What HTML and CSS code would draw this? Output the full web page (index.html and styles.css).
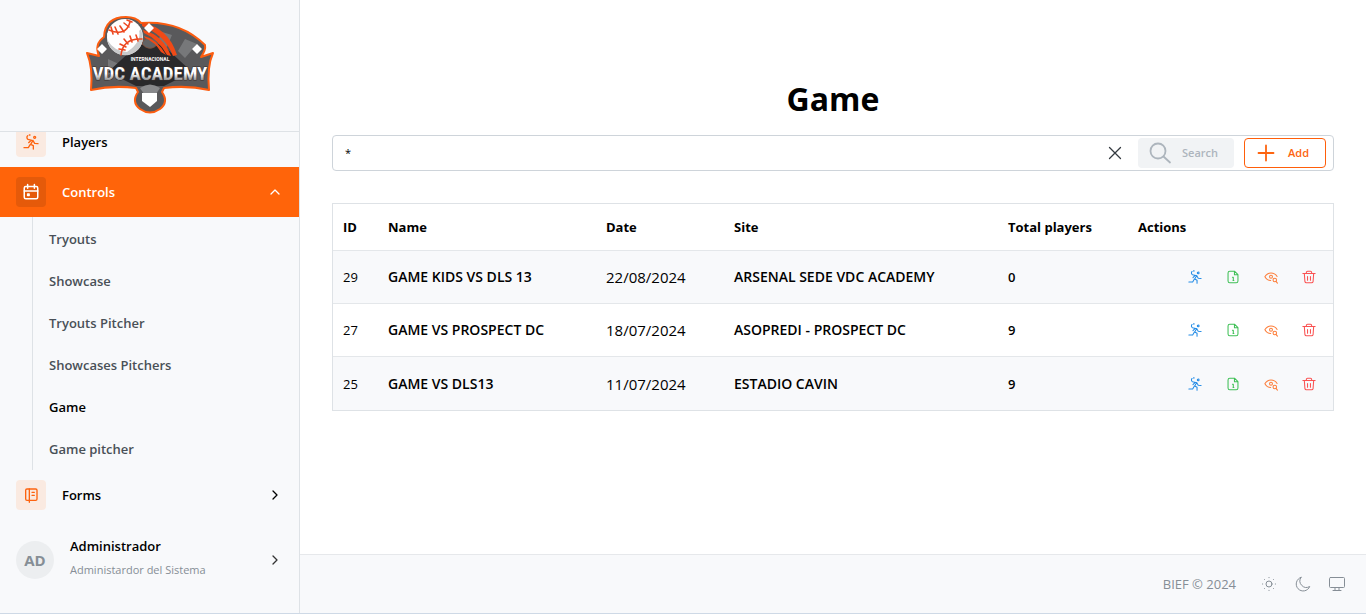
FILE: index.html
```html
<!DOCTYPE html>
<html lang="en">
<head>
<meta charset="utf-8">
<meta name="viewport" content="width=device-width, initial-scale=1">
<title>Game</title>
<link rel="stylesheet" href="styles.css">
</head>
<body>
<svg class="sprite" aria-hidden="true">
  <symbol id="run" viewBox="0 0 24 24"><circle cx="17.500" cy="5" r="1.500"/><path d="M7 2.500a3.500 3.500 0 0 0 .5 5.500l6 1.500M15 9.500l-3.500 6 4 2v5M11 15.500l-3 5H1.500M15 10l2.500 4 5 .5M8.500 13l3-3M9.500 1.500h1"/></symbol>
  <symbol id="file" viewBox="0 0 24 24"><path d="M14.500 2H6.500a3 3 0 0 0-3 3v14a3 3 0 0 0 3 3h11a3 3 0 0 0 3-3V8zM14.500 2v6h6M11 12.500h1.500v5.500M12 18h1.500"/></symbol>
  <symbol id="view" viewBox="0 0 24 24"><path d="M22.500 11C20 7.200 16.500 5 12 5S4 7.200 1.500 11.500C4 15.800 7 18 11.500 18"/><circle cx="12" cy="11.500" r="2.500"/><circle cx="18.500" cy="17" r="3"/><path d="M20.500 19.500l2.500 3"/></symbol>
  <symbol id="trash" viewBox="0 0 24 24"><path d="M1.500 6h21M7.500 6V4a2 2 0 0 1 2-2h5a2 2 0 0 1 2 2v2M4 6l1 14a2.500 2.500 0 0 0 2.500 2h9a2.500 2.500 0 0 0 2.500-2L20 6M9.500 11v6.500M14.500 11v6.500"/></symbol>
  <symbol id="chevron" viewBox="0 0 16 16"><path d="M6 4l4 4-4 4"/></symbol>
</svg>
<div class="shell">
  <aside class="sidebar">
    <header class="brand">
      <svg class="logo" viewBox="0 0 140 110" role="img" aria-label="VDC Academy">
        <defs><linearGradient id="steel" x1="0" y1="0" x2="0" y2="1"><stop offset=".5" stop-color="#fff"/><stop offset=".85" stop-color="#777"/></linearGradient></defs>
        <path d="M7 43L19 46Q14 34 24 27Q25 7 46 7Q56 7 61 13Q100 10 125 35Q126 40 121 47L133 43Q127 56 129 80Q107 75 84 78L82 82Q89 92 80 99Q70 106 60 99Q51 92 58 82L56 78Q33 75 11 80Q13 57 7 43Z" fill="#59595b" stroke="#fc5d10" stroke-width="2" stroke-linejoin="round"/>
        <path d="M82 22l10 3-5 12-10-4zM105 29l12 5-12 14-7-7zM28 49l13 6-13 10z" fill="#77787a"/>
        <path d="M54 38Q70 28 86 38L112 62 84 76H56L28 62Z" fill="#29292b"/>
        <path d="M60 78Q70 71 80 78L76 84H64Z" fill="#88898b"/>
        <path d="M62 34a8 6 0 0 1 16 0q-8 9-16 0z" fill="#626264" stroke="#8e4729" stroke-width=".6"/>
        <path d="M62 13Q88 17 97 45L93 46Q85 25 62 16ZM63 20Q83 25 91 46L87 45Q78 29 64 23ZM64 26Q77 29 86 45L81 42Q75 32 65 28Z" fill="#f04a16"/>
        <path d="M69 13l5 5-5 5-5-5zM22 34l5 5-5 5-5-5zM117 34l5 5-5 5-5-5z" fill="#fff"/>
        <circle cx="45" cy="27" r="18" fill="#fff"/>
        <path d="M27 30Q43 40 61 19Q67 39 49 45Q32 47 27 30Z" fill="#c9cacb"/>
        <path d="M27 23Q44 34 59 20Q62 32 47 42Q34 41 28 31Z" fill="#fff"/>
        <path d="M29 19Q46 26 50 11M41 44Q43 27 62 28" fill="none" stroke="#ed4921" stroke-width="1.600" transform="translate(0 1)"/>
        <path d="M31 17l2 7M35 17l3 7M40 16l4 6M44 13l5 4M47 10l5 2M39 39l6 1M40 34l6 3M44 29l4 5M50 26l2 6M56 25l2 6" stroke="#ed4921" stroke-width="1.600"/>
        <path d="M62 83h15v8l-7 6-8-6z" fill="#fff"/>
        <text x="70" y="51" class="logo-small">INTERNACIONAL</text>
        <text x="70" y="70" class="logo-text">VDC ACADEMY</text>
      </svg>
    </header>
    <nav class="menu" aria-label="Main">
      <a class="menu-item" href="#players"><span class="tile"><svg class="icon-sm bold"><use href="#run"/></svg></span><span>Players</span></a>
      <button class="menu-item active" type="button" aria-expanded="true"><span class="tile"><svg class="icon-md bold" viewBox="0 0 24 24"><rect x="3" y="4.500" width="18" height="16.500" rx="2"/><path d="M7.500 2v5M16.500 2v5M3 10.500h18"/><rect x="7.500" y="14.500" width="2" height="2"/></svg></span><span>Controls</span><svg class="chevron up"><use href="#chevron"/></svg></button>
      <div class="submenu">
        <a href="#tryouts">Tryouts</a>
        <a href="#showcase">Showcase</a>
        <a href="#tryouts-pitcher">Tryouts Pitcher</a>
        <a href="#showcases-pitchers">Showcases Pitchers</a>
        <a class="current" href="#game" aria-current="page">Game</a>
        <a href="#game-pitcher">Game pitcher</a>
      </div>
      <button class="menu-item" type="button" aria-expanded="false"><span class="tile"><svg class="icon-sm bold" viewBox="0 0 24 24"><rect x="4" y="3" width="17" height="17" rx="2"/><path d="M9.500 3v20M13.500 8H17M13.500 12.500H17"/></svg></span><span>Forms</span><svg class="chevron"><use href="#chevron"/></svg></button>
    </nav>
    <button class="user" type="button">
      <span class="avatar">AD</span>
      <span class="user-text"><span class="user-name">Administrador</span><span class="user-role">Administardor del Sistema</span></span>
      <svg class="chevron"><use href="#chevron"/></svg>
    </button>
  </aside>
  <div class="page">
    <main class="content">
      <h1>Game</h1>
      <form class="search">
        <input type="text" value="*" aria-label="Search games">
        <button class="clear" type="reset" aria-label="Clear"><svg viewBox="0 0 16 16"><path d="M2.500 2.500l11 11M13.500 2.500l-11 11"/></svg></button>
        <button class="btn btn-search" type="submit" disabled><svg viewBox="0 0 24 24"><circle cx="10" cy="10" r="7.500"/><path d="M15.500 15.500L22 21.500"/></svg>Search</button>
        <button class="btn btn-add" type="button"><svg viewBox="0 0 24 24"><path d="M12 4.500v15M4.500 12h15"/></svg>Add</button>
      </form>
      <table>
        <colgroup><col class="c-id"><col class="c-name"><col class="c-date"><col class="c-site"><col class="c-total"><col class="c-actions"></colgroup>
        <thead><tr><th>ID</th><th>Name</th><th>Date</th><th>Site</th><th>Total players</th><th>Actions</th></tr></thead>
        <tbody>
          <tr><td>29</td><td class="strong">GAME KIDS VS DLS 13</td><td class="date">22/08/2024</td><td class="strong">ARSENAL SEDE VDC ACADEMY</td><td class="count">0</td><td><div class="actions"><button class="blue" aria-label="Players"><svg><use href="#run"/></svg></button><button class="green" aria-label="Report"><svg><use href="#file"/></svg></button><button class="orange" aria-label="View"><svg><use href="#view"/></svg></button><button class="red" aria-label="Delete"><svg><use href="#trash"/></svg></button></div></td></tr>
          <tr><td>27</td><td class="strong">GAME VS PROSPECT DC</td><td class="date">18/07/2024</td><td class="strong">ASOPREDI - PROSPECT DC</td><td class="count">9</td><td><div class="actions"><button class="blue" aria-label="Players"><svg><use href="#run"/></svg></button><button class="green" aria-label="Report"><svg><use href="#file"/></svg></button><button class="orange" aria-label="View"><svg><use href="#view"/></svg></button><button class="red" aria-label="Delete"><svg><use href="#trash"/></svg></button></div></td></tr>
          <tr><td>25</td><td class="strong">GAME VS DLS13</td><td class="date">11/07/2024</td><td class="strong">ESTADIO CAVIN</td><td class="count">9</td><td><div class="actions"><button class="blue" aria-label="Players"><svg><use href="#run"/></svg></button><button class="green" aria-label="Report"><svg><use href="#file"/></svg></button><button class="orange" aria-label="View"><svg><use href="#view"/></svg></button><button class="red" aria-label="Delete"><svg><use href="#trash"/></svg></button></div></td></tr>
        </tbody>
      </table>
    </main>
    <footer class="footer">
      <span>BIEF © 2024</span>
      <div class="themes">
        <button type="button" aria-label="Light theme"><svg viewBox="0 0 16 16"><circle cx="8" cy="8" r="3"/><path d="M8 1.500v.2M8 14.300v.2M1.500 8h.2M14.300 8h.2M3.300 3.300l.2.2M12.500 12.500l.2.2M3.300 12.700l.2-.2M12.500 3.500l.2-.2"/></svg></button>
        <button type="button" aria-label="Dark theme"><svg viewBox="0 0 16 16"><path d="M6 1.300A7 7 0 1 0 14.700 10.500 6.500 6.500 0 0 1 6 1.300Z"/></svg></button>
        <button type="button" aria-label="System theme"><svg viewBox="0 0 16 16"><rect x=".5" y="1.500" width="15" height="10" rx="1"/><path d="M6 11.500v3M10 11.500v3M4 14.500h8"/></svg></button>
      </div>
    </footer>
  </div>
</div>
</body>
</html>
```
FILE: styles.css
```css
*, *::before, *::after { box-sizing: border-box; }
body { margin: 0; font-family: "Open Sans", "Noto Sans", sans-serif; font-size: 13px; line-height: 20px; color: #000; background: #fff; }
button { font: inherit; color: inherit; background: none; border: 0; padding: 0; text-align: left; cursor: pointer; }
a { color: inherit; text-decoration: none; }
svg { fill: none; stroke: currentColor; stroke-linecap: round; stroke-linejoin: round; }
.sprite { display: none; }
.shell { display: grid; grid-template-columns: 300px minmax(0, 1fr); height: 100vh; border-bottom: 1px solid #ced9e6; }
.sidebar { display: flex; flex-direction: column; min-height: 0; background: #f8f9fb; border-right: 1px solid #dee2e6; }
.brand { display: flex; justify-content: center; padding: 10px 0 11px; border-bottom: 1px solid #dee2e6; }
.logo { width: 140px; height: 110px; stroke: none; }
.logo-small { font: bold 5px Roboto, sans-serif; fill: #fff; text-anchor: middle; }
.logo-text { font: bold 19px "Roboto Condensed", Roboto, sans-serif; fill: url(#steel); stroke: #39302d; stroke-width: 1; paint-order: stroke; text-anchor: middle; }

.menu { flex: 1; min-height: 0; overflow: hidden; display: flex; flex-direction: column; justify-content: flex-end; }
.menu-item { flex: none; display: flex; align-items: center; gap: 16px; width: 100%; height: 50px; padding: 0 16px; font-weight: 600; }
.menu-item.active { background: #ff640a; color: #fff; }
.tile { display: grid; place-items: center; width: 30px; height: 30px; border-radius: 4px; background: #faeae1; color: #fd6410; }
.active .tile { background: #e55a0a; color: #fff; }
.icon-sm { width: 16px; height: 16px; }
.icon-md { width: 18px; height: 18px; }
.bold { stroke-width: 2; }
.chevron { width: 16px; height: 16px; margin-left: auto; stroke-width: 1.3; }
.up { transform: rotate(-90deg); }
.submenu { flex: none; margin-left: 32px; padding-bottom: 1px; border-left: 1px solid #dee2e6; }
.submenu a { display: block; height: 42px; padding: 12px 16px 10px; font-weight: 600; color: #495057; }
.submenu .current { color: #000; }
.user { flex: none; display: flex; align-items: center; gap: 16px; padding: 14px 16px 27px; }
.avatar { display: grid; place-items: center; width: 38px; height: 38px; border-radius: 50%; background: #eceef0; color: #868e96; font-size: 15px; font-weight: 700; }
.user-text { display: grid; gap: 2px; padding-bottom: 6px; }
.user-name { line-height: 24px; font-weight: 600; }
.user-role { color: #868e96; font-size: 11px; line-height: 20px; }
.user .chevron { color: #333; }

.page { display: flex; flex-direction: column; min-width: 0; }
.content { flex: 1; padding: 78px 32px 0; }
h1 { margin: 0 0 15px; font-size: 32px; line-height: 42px; font-weight: 700; text-align: center; }
.search { display: flex; align-items: center; height: 36px; margin-bottom: 32px; padding: 0 7px 0 12px; border: 1px solid #ced4da; border-radius: 4px; }
.search input { flex: 1; min-width: 0; border: 0; outline: 0; padding: 0; font: inherit; font-size: 11px; background: none; }
.clear { display: grid; margin-right: 15px; color: #343a40; }
.clear svg { width: 16px; height: 16px; stroke-width: 1.3; }
.btn { display: flex; align-items: center; gap: 10px; height: 30px; border-radius: 4px; font-size: 11px; font-weight: 600; }
.btn svg { width: 24px; height: 24px; stroke-width: 1.8; }
.btn-search { padding: 0 16px 0 10px; background: #f1f3f5; color: #adb5bd; margin-right: 10px; }
.btn-add { border: 1px solid #ff5e0a; color: #fd6410; padding: 0 16px 0 9px; }

table { width: 100%; table-layout: fixed; border-collapse: separate; border-spacing: 0; border: 1px solid #dee2e6; }
.c-id { width: 45px; }
.c-name { width: 218px; }
.c-date { width: 128px; }
.c-site { width: 274px; }
.c-total { width: 130px; }
.c-actions { width: 205px; }
th, td { padding: 0 10px; text-align: left; white-space: nowrap; border-bottom: 1px solid #e4e7ea; }
th { height: 47px; font-weight: 700; }
td { height: 53px; }
tbody tr:nth-child(odd) { background: #f8f9fb; }
tbody tr:last-child td { border-bottom: 0; }
.strong { font-size: 14px; font-weight: 600; }
.count { font-weight: 600; }
.date { font-size: 15px; }
.actions { display: flex; justify-content: flex-end; gap: 22px; padding-right: 6px; }
.actions button, .actions svg { display: block; width: 16px; height: 16px; }
.actions svg { padding: 1px; stroke-width: 1.8; }
.blue { color: #228be6; }
.green { color: #40c057; }
.orange { color: #fd7e3a; }
.red { color: #fa5252; }

.footer { display: flex; align-items: center; justify-content: flex-end; gap: 24px; height: 59px; padding: 0 20px; background: #f8f9fb; border-top: 1px solid #e6e8eb; color: #868e96; }
.themes { display: flex; gap: 16px; }
.themes button, .themes svg { display: block; width: 18px; height: 16px; }
```
